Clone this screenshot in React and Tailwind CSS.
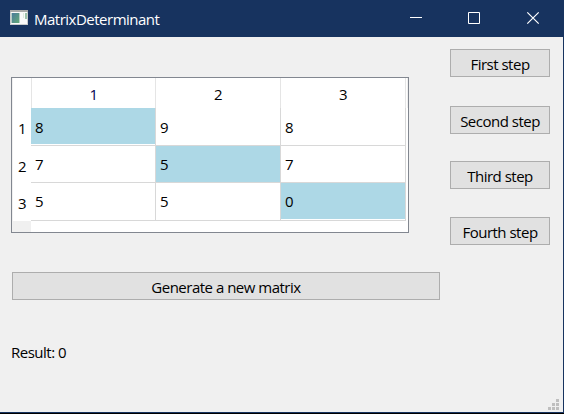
const values = [
  [8, 9, 8],
  [7, 5, 7],
  [5, 5, 0],
];

const columns = [
  { name: 1, style: "w-[124px] text-[#000050]" },
  { name: 2, style: "w-[125px]" },
  { name: 3, style: "w-[125px]" },
];

// The last pixel of the first and third rows stays white above the grid line.
const rowStyles = [
  { row: "h-[38px]", fill: "h-9 pt-px", label: "pt-px" },
  { row: "h-[37px]", fill: "h-9 pb-px", label: "pt-[2px]" },
  { row: "h-[38px]", fill: "h-9", label: "pt-px" },
];

function TitleBar() {
  return (
    <header className="flex h-[37px] items-center bg-[#17335f] pl-[10px] text-white">
      <svg width="18" height="15" viewBox="0 0 18 15" className="mb-[2px] shrink-0" shapeRendering="crispEdges">
        <defs>
          <linearGradient id="pane" x1="0" y1="0" x2="1" y2="1">
            <stop offset="0" stopColor="#4b7b9c" />
            <stop offset="1" stopColor="#62a978" />
          </linearGradient>
        </defs>
        <rect width="18" height="15" fill="#c9cccd" />
        <rect width="18" height="2" fill="#a9aaa9" />
        <rect x="1" y="2" width="16" height="12" fill="#fafafa" />
        <rect x="1" y="3" width="9" height="10" fill="#b5cec5" />
        <rect x="2" y="3" width="7" height="10" fill="url(#pane)" />
        <rect x="13" y="3" width="1" height="5" fill="#dceade" />
        <rect x="15" y="3" width="2" height="6" fill="#9dc2aa" />
      </svg>
      <h1 className="ml-[6px] w-[350px] whitespace-nowrap">MatrixDeterminant</h1>
      <svg width="180" height="37" viewBox="384 0 180 37" className="shrink-0" fill="none" stroke="#fff">
        <path d="M410 17.5h12" />
        <path d="M468.5 12.5h11v11h-11z" />
        <path d="M527.3 12.3l11.4 11.4M538.7 12.3l-11.4 11.4" strokeWidth="1.2" />
      </svg>
    </header>
  );
}

function Button({ children, className = "" }) {
  return (
    <button className={`flex h-7 items-center justify-center whitespace-nowrap border border-[#adadad] bg-[#e1e1e1] pt-px tracking-[-0.5px] ${className}`}>
      {children}
    </button>
  );
}

function MatrixTable() {
  return (
    <div className="h-[156px] w-[398px] border border-[#828790] bg-white">
      <div className="flex h-[30px] border-l border-[#f0f0f0]">
        <div className="w-[19px] border-r border-[#e5e5e5]" />
        {columns.map(({ name, style }) => (
          <div key={name} className={`flex items-center justify-center border-r border-[#e5e5e5] pt-px ${style}`}>
            {name}
          </div>
        ))}
        <div className="w-[2px] border-r border-[#f0f0f0]" />
      </div>
      {values.map((row, r) => (
        <div key={r} className={`flex border-l border-[#f0f0f0] ${rowStyles[r].row}`}>
          <div className={`flex w-[18px] items-center pl-[5px] ${rowStyles[r].label}`}>{r + 1}</div>
          {row.map((value, c) => (
            <div key={c} className="w-[125px] border-b border-r border-[#d8d8d8]">
              <div className={`flex items-center pl-[4px] ${rowStyles[r].fill} ${r === c ? "bg-[#add8e6]" : ""}`}>{value}</div>
            </div>
          ))}
        </div>
      ))}
      <div className="h-[11px] w-[19px] bg-[#f0f0f0]" />
    </div>
  );
}

export default function App() {
  return (
    <div className="flex h-[414px] w-[564px] flex-col overflow-hidden border-b border-black bg-[#f0f0f0] font-['Open_Sans','Noto_Sans',sans-serif] text-[15px] leading-5 tracking-[-0.5px] text-black">
      <TitleBar />
      <main className="flex grow flex-col border-b border-r border-[#17335f]">
        <div className="flex">
          <div className="w-[450px] pl-[11px] pt-10">
            <MatrixTable />
            <Button className="ml-px mt-[39px] w-[428px]">Generate a new matrix</Button>
          </div>
          <div className="flex w-[100px] flex-col pt-3">
            <Button>First step</Button>
            <Button className="mt-[29px]">Second step</Button>
            <Button className="mt-[27px]">Third step</Button>
            <Button className="mt-7">Fourth step</Button>
          </div>
        </div>
        <p className="ml-[11px] mt-[42px]">Result: 0</p>
        <svg width="11" height="11" className="mb-[2px] ml-auto mr-[4px] mt-auto" fill="#bfbfbf" shapeRendering="crispEdges">
          <path d="M8 0h3v3h-3zM4 4h3v3h-3zM8 4h3v3h-3zM0 8h3v3h-3zM4 8h3v3h-3zM8 8h3v3h-3z" />
        </svg>
      </main>
    </div>
  );
}
